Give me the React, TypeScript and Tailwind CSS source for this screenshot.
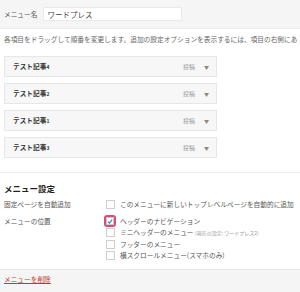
import React from "react";

const items = ["テスト記事4", "テスト記事2", "テスト記事1", "テスト記事3"];

function Box({ checked }: { checked?: boolean }) {
  if (checked) {
    return (
      <span className="flex items-center justify-center w-[12px] h-[12px] rounded-[3px] border-2 border-[#e0487a] bg-[#f7c9d8] -ml-[1px] mr-[1px]">
        <span className="flex items-center justify-center w-[8px] h-[8px] bg-white border border-[#c8c8c8]">
          <svg width="7" height="7" viewBox="0 0 10 10">
            <path d="M1.5 5.2 L4 7.6 L8.6 2" stroke="#1e8cbe" strokeWidth="2" fill="none" />
          </svg>
        </span>
      </span>
    );
  }
  return <span className="block w-[9px] h-[9px] bg-white border border-[#cfcfcf] mr-[2px]" />;
}

function Option({ children, checked }: { children: React.ReactNode; checked?: boolean }) {
  return (
    <div className="flex items-center h-[11.5px] gap-[3px]">
      <span className="w-[12px] flex items-center justify-center">
        <Box checked={checked} />
      </span>
      <span className="whitespace-nowrap">{children}</span>
    </div>
  );
}

export default function App() {
  return (
    <div
      className="w-[300px] h-[292px] bg-white overflow-hidden flex flex-col text-[6.7px] leading-[11px] text-[#555]"
      style={{ fontFamily: '"Noto Sans CJK JP", "Noto Sans", sans-serif' }}
    >
      <div className="h-[29px] shrink-0 bg-[#f5f5f5] border-b border-[#ececec] flex items-center px-[4px] gap-[6px]">
        <span className="whitespace-nowrap">メニュー名</span>
        <div className="w-[139px] h-[14px] bg-white border border-[#eaeaea] flex items-center px-[3px] text-[7.5px] text-[#444]">
          ワードプレス
        </div>
      </div>
      <div className="px-[4px] mt-[5px] whitespace-nowrap overflow-hidden text-[#666]">
        各項目をドラッグして順番を変更します。追加の設定オプションを表示するには、項目の右側にあ
      </div>
      <div className="px-[4px] mt-[11px] flex flex-col gap-[6px]">
        {items.map((t) => (
          <div
            key={t}
            className="w-[213px] h-[21px] bg-[#f7f7f7] border border-[#e6e6e6] flex items-center pl-[8px] pr-[7px]"
          >
            <span className="font-bold text-[#333] flex-1">{t.slice(0, 5)}<span className="text-[5px]">{t.slice(5)}</span></span>
            <span className="text-[#999] text-[6px]">投稿</span>
            <span className="ml-[9px] text-[#888] text-[5px]">▼</span>
          </div>
        ))}
      </div>
      <div className="mt-[14px] border-t border-[#efefef]" />
      <div className="px-[4px] mt-[9px] font-bold text-[8.5px] leading-[12px] text-[#222]">メニュー設定</div>
      <div className="px-[4px] mt-[5px] flex">
        <div className="w-[101px] shrink-0">固定ページを自動追加</div>
        <Option>このメニューに新しいトップレベルページを自動的に追加</Option>
      </div>
      <div className="px-[4px] mt-[5px] flex">
        <div className="w-[101px] shrink-0 h-[11.5px] leading-[11.5px]">メニューの位置</div>
        <div className="flex flex-col">
          <Option checked>ヘッダーのナビゲーション</Option>
          <Option>
            ミニヘッダーのメニュー <span className="text-[5px] text-[#999]">(現在の設定: ワードプレス2)</span>
          </Option>
          <Option>フッターのメニュー</Option>
          <Option>横スクロールメニュー(スマホのみ)</Option>
        </div>
      </div>
      <div className="mt-[7px] flex-1 bg-[#f5f5f5] border-t border-[#e8e8e8] px-[4px] pt-[4px]">
        <span className="text-[#c0392b] underline">メニューを削除</span>
      </div>
    </div>
  );
}
